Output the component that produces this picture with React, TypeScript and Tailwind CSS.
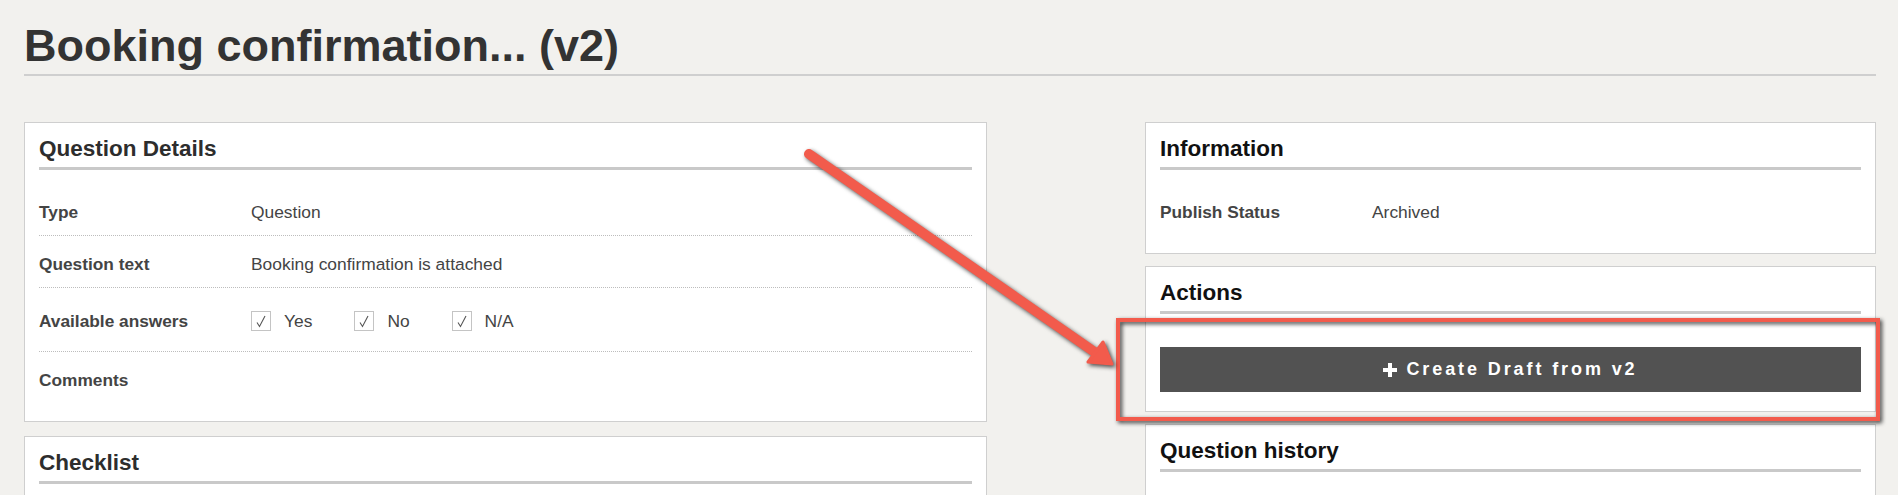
import React from "react";

const sans = "font-['Liberation_Sans',Arial,sans-serif]";

function CardHeader({ title, dark }: { title: string; dark?: boolean }) {
  return (
    <div>
      <h3 className={`text-[22.5px] leading-[32px] font-bold ${dark ? "text-[#111]" : "text-[#2d2d2d]"}`}>{title}</h3>
      <div className="mt-[2px] h-[3px] bg-[#c9c9c9]" />
    </div>
  );
}

function Check() {
  return (
    <span className="flex h-[20px] w-[20px] items-center justify-center border border-[#c4c4c4] bg-white">
      <svg width="14" height="14" viewBox="0 0 14 14" fill="none">
        <path d="M3 8.5 L5.5 12.5 L11 2" stroke="#555" strokeWidth="1.1" />
      </svg>
    </span>
  );
}

function Row({ label, children, last, tall }: { label: string; children?: React.ReactNode; last?: boolean; tall?: boolean }) {
  return (
    <div className={`flex ${tall ? "pt-[22px] pb-[19px]" : "pt-[17px] pb-[12px]"} ${last ? "" : "border-b border-dotted border-[#bdbdbd]"}`}>
      <div className="w-[212px] shrink-0 text-[17.3px] leading-[22px] font-bold text-[#444]">{label}</div>
      <div className="text-[17.4px] leading-[22px] text-[#444]">{children}</div>
    </div>
  );
}

export default function App() {
  const answers = ["Yes", "No", "N/A"];

  return (
    <div className={`relative h-[495px] overflow-hidden bg-[#f2f1ee] pl-6 pr-[22px] pt-[20px] ${sans}`}>
      <h1 className="text-[45px] leading-[52px] font-bold text-[#333]">Booking confirmation... (v2)</h1>
      <div className="mt-[2px] h-[2px] bg-[#cfcfcf]" />

      <div className="mt-[46px] flex justify-between">
        {/* left column */}
        <div className="flex w-[963px] flex-col gap-[14px]">
          <div className="border border-[#cfcfcf] bg-white px-[14px] pt-[10px] pb-[18px]">
            <CardHeader title="Question Details" />
            <div className="mt-[14px]">
              <Row label="Type">Question</Row>
              <Row label="Question text">Booking confirmation is attached</Row>
              <Row label="Available answers" tall>
                <div className="flex gap-[42px]">
                  {answers.map((a) => (
                    <div key={a} className="flex items-center gap-[13px]">
                      <Check />
                      <span>{a}</span>
                    </div>
                  ))}
                </div>
              </Row>
              <Row label="Comments" last />
            </div>
          </div>

          <div className="h-[80px] border border-[#cfcfcf] bg-white px-[14px] pt-[10px]">
            <CardHeader title="Checklist" />
          </div>
        </div>

        {/* right column */}
        <div className="flex w-[731px] flex-col gap-[12px]">
          <div className="border border-[#cfcfcf] bg-white px-[14px] pt-[10px] pb-[18px]">
            <CardHeader title="Information" dark />
            <div className="mt-[14px]">
              <Row label="Publish Status" last>Archived</Row>
            </div>
          </div>

          <div className="border border-[#cfcfcf] bg-white px-[14px] pt-[10px] pb-[19px]">
            <CardHeader title="Actions" dark />
            <button className="mt-[33px] flex h-[45px] w-full items-center justify-center gap-[9px] bg-[#525252] text-[18px] font-bold tracking-[2.9px] text-white">
              <svg width="14" height="14" viewBox="0 0 14 14" fill="white">
                <rect x="5" y="0" width="4" height="14" />
                <rect x="0" y="5" width="14" height="4" />
              </svg>
              <span>Create Draft from v2</span>
            </button>
          </div>

          <div className="h-[80px] border border-[#cfcfcf] bg-white px-[14px] pt-[10px]">
            <CardHeader title="Question history" dark />
          </div>
        </div>
      </div>

      {/* annotation: highlight box */}
      <div className="pointer-events-none absolute left-[1116px] top-[318px] h-[103px] w-[764px] border-[4px] border-[#f25b4c] drop-shadow-[2px_2px_2px_rgba(0,0,0,0.75)]" />

      {/* annotation: arrow */}
      <svg
        className="pointer-events-none absolute left-0 top-0 drop-shadow-[2px_2px_2px_rgba(0,0,0,0.7)]"
        width="1898"
        height="495"
        viewBox="0 0 1898 495"
      >
        <line x1="809" y1="154" x2="1096" y2="353" stroke="#f25b4c" strokeWidth="10" strokeLinecap="round" />
        <polygon points="1112,364 1088,362 1103,342" fill="#f25b4c" stroke="#f25b4c" strokeWidth="3" strokeLinejoin="round" />
      </svg>
    </div>
  );
}
